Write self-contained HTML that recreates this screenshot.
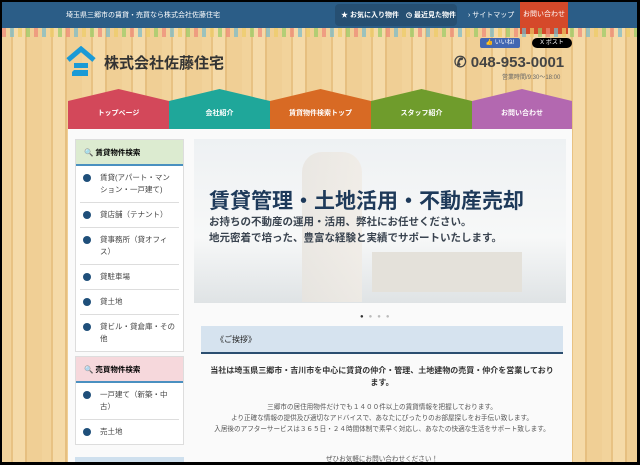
<!DOCTYPE html>
<html><head><meta charset="utf-8"><style>
*{margin:0;padding:0;box-sizing:border-box}
body{width:640px;height:465px;background:#000;overflow:hidden;font-family:"Liberation Sans","Noto Sans CJK JP",sans-serif;position:relative}
#w{position:absolute;left:2px;top:2px;width:635px;height:460px;overflow:hidden;background-color:#efcd93;background-image:repeating-linear-gradient(90deg,#f2d39b 0 9px,#e8c283 9px 11px,#f5daa8 11px 23px,#e6bf80 23px 25px,#f0cf95 25px 40px)}
.top{position:absolute;left:0;top:0;width:635px;height:26px;background:#2b5d87;color:#fff;font-size:7px}
.abs{position:absolute}
.nav div{position:absolute;top:87px;height:40px;color:#fff;font-size:7px;font-weight:bold;text-align:center;line-height:12px;padding-top:19px}
.side{position:absolute;left:73px;width:109px;background:#fff;border:1px solid #ddd}
.side .h{height:26px;font-size:7.5px;font-weight:bold;line-height:26px;padding-left:8px;position:relative;border-bottom:2px solid #4a90c0}
.side .i{font-size:7.5px;color:#444;padding:6px 4px 6px 20px;border-bottom:1px solid #ddd;position:relative;line-height:12px;margin:0 4px}
.side .i:before{content:"";position:absolute;left:3px;top:8px;width:8px;height:8px;border-radius:50%;background:#1f4f7a}
.c{text-align:center;color:#555;font-size:6.6px;line-height:10px}
</style></head><body><div id="w">
<div class="top">
<div class="abs" style="left:64px;top:8px">埼玉県三郷市の賃貸・売買なら株式会社佐藤住宅</div>
<div class="abs" style="left:333px;top:2px;width:122px;height:22px;background:#264f72;border-radius:4px"></div>
<div class="abs" style="left:339px;top:8px;font-weight:bold">★ お気に入り物件　◷ 最近見た物件</div>
<div class="abs" style="left:466px;top:8px">› サイトマップ</div>
<div class="abs" style="left:518px;top:0;width:48px;height:32px;background:#d5492a;text-align:center;line-height:26px">お問い合わせ</div>
</div>
<div class="abs" style="left:0;top:26px;width:635px;height:9px;background:repeating-linear-gradient(90deg,#e87 0 4px,transparent 4px 8px,#7bc 8px 12px,transparent 12px 16px,#ec6 16px 20px,transparent 20px 24px,#9c6 24px 28px,transparent 28px 32px);opacity:.7"></div>
<svg class="abs" style="left:64px;top:44px" width="30" height="32" viewBox="0 0 30 32"><path d="M2 14 L15 3 L28 14" stroke="#1a9ad6" stroke-width="5" fill="none"/><path d="M8 17h14v5H8zM8 24h14v6H6v-4" fill="#1a9ad6"/></svg>
<div class="abs" style="left:102px;top:50px;font-size:15px;font-weight:bold;color:#333">株式会社佐藤住宅</div>
<div class="abs" style="left:478px;top:36px;width:40px;height:10px;background:#4267b2;color:#fff;font-size:6px;line-height:10px;text-align:center;border-radius:2px">👍 いいね!</div>
<div class="abs" style="left:530px;top:36px;width:40px;height:10px;background:#000;color:#fff;font-size:6px;line-height:10px;text-align:center;border-radius:5px">X ポスト</div>
<div class="abs" style="left:452px;top:51px;font-size:15px;font-weight:bold;color:#444">✆ 048-953-0001</div>
<div class="abs" style="left:500px;top:70px;font-size:6px;color:#666">営業時間/9:30～18:00</div>
<div class="nav">
<div style="left:66px;width:101px;background:#d3485a;clip-path:polygon(0 30%,50% 0,100% 30%,100% 100%,0 100%)">トップページ</div>
<div style="left:167px;width:101px;background:#1fa79a;clip-path:polygon(0 30%,50% 0,100% 30%,100% 100%,0 100%)">会社紹介</div>
<div style="left:268px;width:101px;background:#d86a24;clip-path:polygon(0 30%,50% 0,100% 30%,100% 100%,0 100%)">賃貸物件検索トップ</div>
<div style="left:369px;width:101px;background:#6f9c2c;clip-path:polygon(0 30%,50% 0,100% 30%,100% 100%,0 100%)">スタッフ紹介</div>
<div style="left:470px;width:100px;background:#b368b0;clip-path:polygon(0 30%,50% 0,100% 30%,100% 100%,0 100%)">お問い合わせ</div>
</div>
<div class="abs" style="left:66px;top:127px;width:504px;height:340px;background:#fafafa"></div>
<div class="side" style="top:137px">
<div class="h" style="background:#dcebd0">🔍 賃貸物件検索</div>
<div class="i">賃貸(アパート・マンション・一戸建て)</div>
<div class="i">貸店舗（テナント）</div>
<div class="i">貸事務所（貸オフィス）</div>
<div class="i">貸駐車場</div>
<div class="i">貸土地</div>
<div class="i" style="border:0">貸ビル・貸倉庫・その他</div>
</div>
<div class="side" style="top:354px">
<div class="h" style="background:#f6d8dc">🔍 売買物件検索</div>
<div class="i">一戸建て（新築・中古）</div>
<div class="i" style="border:0">売土地</div>
</div>
<div class="abs" style="left:73px;top:455px;width:109px;height:10px;background:#cfe0ee"></div>
<div class="abs" style="left:192px;top:137px;width:372px;height:164px;background:linear-gradient(180deg,#eef1f3,#f7f8f8 60%,#dfe3e5)"></div>
<div class="abs" style="left:300px;top:150px;width:60px;height:150px;background:linear-gradient(90deg,#e8e4de,#f0ebe4);opacity:.8;border-radius:20px 20px 0 0"></div>
<div class="abs" style="left:370px;top:250px;width:150px;height:40px;background:#e4e1da"></div>
<div class="abs" style="left:207px;top:183px;font-size:21px;font-weight:bold;color:#1e3a5a">賃貸管理・土地活用・不動産売却</div>
<div class="abs" style="left:207px;top:212px;font-size:10.5px;font-weight:bold;color:#3a4450;line-height:16px">お持ちの不動産の運用・活用、弊社にお任せください。<br>地元密着で培った、豊富な経験と実績でサポートいたします。</div>
<div class="abs" style="left:358px;top:312px;font-size:6px;color:#bbb;letter-spacing:5px"><span style="color:#333">●</span>●●●</div>
<div class="abs" style="left:199px;top:324px;width:362px;height:28px;background:#d6e3ef;border-bottom:2px solid #2b4e70;font-size:8px;line-height:28px;padding-left:15px;color:#222">《ご挨拶》</div>
<div class="abs c" style="left:205px;top:363px;width:350px;font-size:8px;font-weight:bold;color:#333;line-height:12px">当社は埼玉県三郷市・吉川市を中心に賃貸の仲介・管理、土地建物の売買・仲介を営業しております。</div>
<div class="abs c" style="left:205px;top:400px;width:350px;line-height:11px">三郷市の居住用物件だけでも１４００件以上の賃貸情報を把握しております。<br>より正確な情報の提供及び適切なアドバイスで、あなたにぴったりのお部屋探しをお手伝い致します。<br>入居後のアフターサービスは３６５日・２４時間体制で素早く対応し、あなたの快適な生活をサポート致します。</div>
<div class="abs c" style="left:199px;top:453px;width:362px">ぜひお気軽にお問い合わせください！</div>
</div></body></html>
